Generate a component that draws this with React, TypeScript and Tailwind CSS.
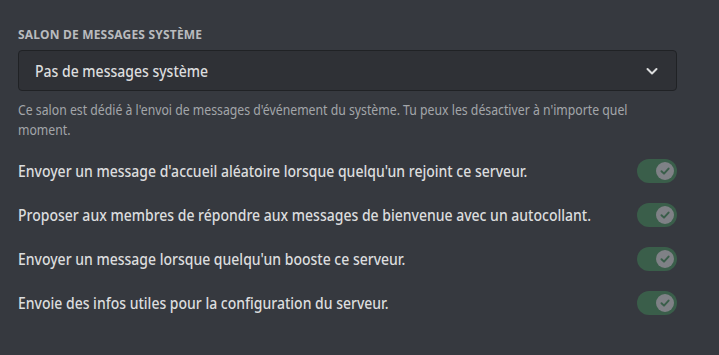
import React from "react";

const rows = [
  "Envoyer un message d'accueil aléatoire lorsque quelqu'un rejoint ce serveur.",
  "Proposer aux membres de répondre aux messages de bienvenue avec un autocollant.",
  "Envoyer un message lorsque quelqu'un booste ce serveur.",
  "Envoie des infos utiles pour la configuration du serveur.",
];

function Toggle() {
  return (
    <div className="flex h-[24px] w-[40px] shrink-0 items-center justify-end rounded-full bg-[#3a5e4a] pr-[3px]">
      <div className="flex h-[18px] w-[18px] items-center justify-center rounded-full bg-[#7f8186]">
        <svg width="12" height="12" viewBox="0 0 12 12" fill="none">
          <path d="M2.5 6.2 L5 8.6 L9.6 3.6" stroke="#3a5e4a" strokeWidth="2" strokeLinecap="round" strokeLinejoin="round" />
        </svg>
      </div>
    </div>
  );
}

export default function App() {
  return (
    <div
      className="h-[355px] w-[719px] overflow-hidden bg-[#36393f] px-[18px] pt-[27px]"
      style={{ fontFamily: '"Noto Sans", sans-serif' }}
    >
      <div className="w-[659px]">
        <div className="text-[12px] font-bold uppercase leading-[16px] tracking-[0.2px] text-[#b9bbbe]">
          Salon de messages système
        </div>
        <div className="mt-[7px] flex h-[41px] items-center justify-between rounded-[4px] border border-[#202225] bg-[#2f3136] pl-[16px] pr-[12px]">
          <span className="origin-left scale-x-[0.875] whitespace-nowrap text-[16px] font-medium text-[#dcddde]">Pas de messages système</span>
          <svg width="24" height="24" viewBox="0 0 24 24" fill="none">
            <path d="M7.5 10 L12 14.5 L16.5 10" stroke="#dcddde" strokeWidth="2" strokeLinecap="round" strokeLinejoin="round" />
          </svg>
        </div>
        <div className="mt-[9px] w-[753px] origin-left scale-x-[0.875] text-[14px] leading-[20px] text-[#a3a6aa]">
          Ce salon est dédié à l'envoi de messages d'événement du système. Tu peux les désactiver à n'importe quel moment.
        </div>
        <div className="mt-[9px] flex flex-col">
          {rows.map((r) => (
            <div key={r} className="flex h-[44px] items-center justify-between">
              <div className="min-w-0 flex-1">
                <div className="origin-left scale-x-[0.875] whitespace-nowrap text-[16px] font-medium text-[#dcddde]">{r}</div>
              </div>
              <Toggle />
            </div>
          ))}
        </div>
      </div>
    </div>
  );
}
